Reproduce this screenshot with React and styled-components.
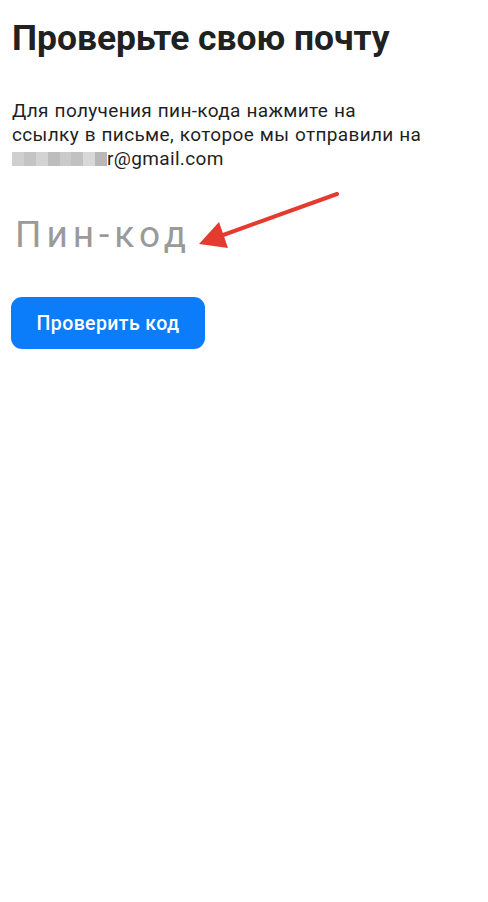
import React from "react";
import styled, { createGlobalStyle } from "styled-components";

const Global = createGlobalStyle`
  html, body { margin: 0; padding: 0; background: #ffffff; }
  body { font-family: Roboto, "Noto Sans", Arial, sans-serif; }
`;

const Page = styled.div`
  position: relative;
  width: 488px;
  min-height: 902px;
  background: #fff;
  padding: 16px 12px 0 12px;
  box-sizing: border-box;
  display: flex;
  flex-direction: column;
  align-items: flex-start;
`;

const Title = styled.h1`
  margin: 0;
  font-family: Roboto, Arial, sans-serif;
  font-weight: 700;
  font-size: 35.4px;
  line-height: 44px;
  color: #212121;
`;

const Text = styled.p`
  margin: 39px 0 0 0;
  font-family: Roboto, Arial, sans-serif;
  font-size: 19px;
  line-height: 24px;
  letter-spacing: 0.35px;
  word-spacing: 0.6px;
  color: #1f1f1f;
  white-space: nowrap;
`;

const Blur = styled.span`
  display: inline-flex;
  vertical-align: -1px;
  height: 14px;
  width: 95px;
`;

const BlurCell = styled.span`
  flex: 1;
  background: ${(p) => p.$c};
`;

const PinRow = styled.div`
  margin-top: 42px;
  padding-left: 3px;
  font-family: Roboto, Arial, sans-serif;
  font-weight: 400;
  font-size: 37px;
  line-height: 44px;
  letter-spacing: 5px;
  color: #9a9a9a;
`;

const Button = styled.button`
  margin-top: 40px;
  margin-left: -1px;
  width: 194px;
  height: 52px;
  border: none;
  border-radius: 11px;
  background: #0b7dfb;
  color: #fff;
  font-family: Roboto, Arial, sans-serif;
  font-weight: 500;
  font-size: 19.5px;
  letter-spacing: 0.4px;
  padding: 0;
`;

const Arrow = styled.svg`
  position: absolute;
  left: 0;
  top: 0;
  pointer-events: none;
`;

const blurColors = ["#cfcfcf", "#c4c4c4", "#d3d3d3", "#bdbdbd", "#cacaca", "#c1c1c1", "#d8d8d8", "#b8b8b8"];

export default function App() {
  return (
    <>
      <Global />
      <Page>
        <Title>Проверьте свою почту</Title>
        <Text>
          Для получения пин-кода нажмите на
          <br />
          ссылку в письме, которое мы отправили на
          <br />
          <Blur>
            {blurColors.map((c, i) => (
              <BlurCell key={i} $c={c} />
            ))}
          </Blur>
          r@gmail.com
        </Text>
        <PinRow>Пин-код</PinRow>
        <Button>Проверить код</Button>
        <Arrow width="488" height="902" viewBox="0 0 488 902">
          <line x1="337" y1="194" x2="215" y2="238" stroke="#e53a2f" strokeWidth="4" strokeLinecap="round" />
          <polygon points="199,244 219,222 228,248" fill="#e53a2f" />
        </Arrow>
      </Page>
    </>
  );
}
